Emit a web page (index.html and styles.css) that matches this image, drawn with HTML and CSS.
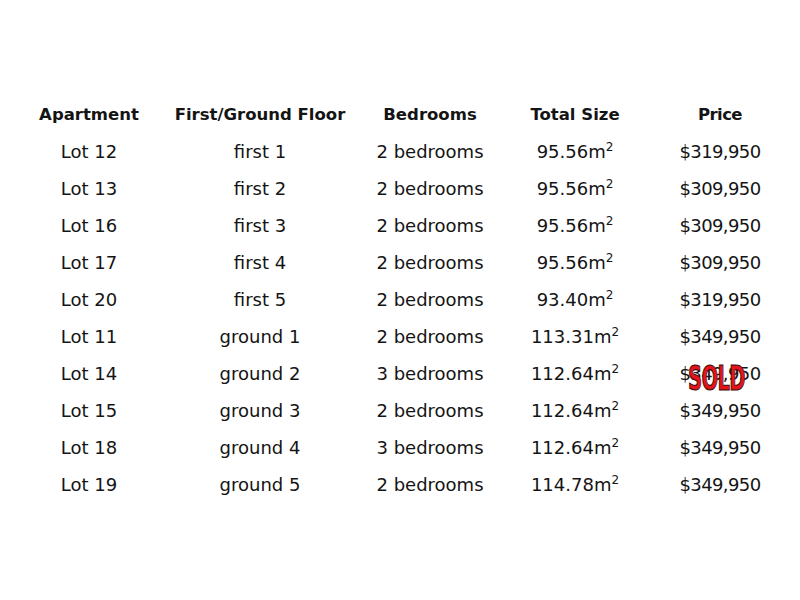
FILE: index.html
```html
<!DOCTYPE html>
<html>
<head>
<meta charset="utf-8">
<link rel="stylesheet" href="styles.css">
</head>
<body>
<div class="table">
  <div class="row head">
    <div class="c1">Apartment</div><div class="c2">First/Ground Floor</div><div class="c3">Bedrooms</div><div class="c4">Total Size</div><div class="c5">Price</div>
  </div>
  <div class="row"><div class="c1">Lot 12</div><div class="c2">first 1</div><div class="c3">2 bedrooms</div><div class="c4">95.56m<sup>2</sup></div><div class="c5">$319,950</div></div>
  <div class="row"><div class="c1">Lot 13</div><div class="c2">first 2</div><div class="c3">2 bedrooms</div><div class="c4">95.56m<sup>2</sup></div><div class="c5">$309,950</div></div>
  <div class="row"><div class="c1">Lot 16</div><div class="c2">first 3</div><div class="c3">2 bedrooms</div><div class="c4">95.56m<sup>2</sup></div><div class="c5">$309,950</div></div>
  <div class="row"><div class="c1">Lot 17</div><div class="c2">first 4</div><div class="c3">2 bedrooms</div><div class="c4">95.56m<sup>2</sup></div><div class="c5">$309,950</div></div>
  <div class="row"><div class="c1">Lot 20</div><div class="c2">first 5</div><div class="c3">2 bedrooms</div><div class="c4">93.40m<sup>2</sup></div><div class="c5">$319,950</div></div>
  <div class="row"><div class="c1">Lot 11</div><div class="c2">ground 1</div><div class="c3">2 bedrooms</div><div class="c4">113.31m<sup>2</sup></div><div class="c5">$349,950</div></div>
  <div class="row"><div class="c1">Lot 14</div><div class="c2">ground 2</div><div class="c3">3 bedrooms</div><div class="c4">112.64m<sup>2</sup></div><div class="c5 sold-cell">$349,950<span class="sold">SOLD</span></div></div>
  <div class="row"><div class="c1">Lot 15</div><div class="c2">ground 3</div><div class="c3">2 bedrooms</div><div class="c4">112.64m<sup>2</sup></div><div class="c5">$349,950</div></div>
  <div class="row"><div class="c1">Lot 18</div><div class="c2">ground 4</div><div class="c3">3 bedrooms</div><div class="c4">112.64m<sup>2</sup></div><div class="c5">$349,950</div></div>
  <div class="row"><div class="c1">Lot 19</div><div class="c2">ground 5</div><div class="c3">2 bedrooms</div><div class="c4">114.78m<sup>2</sup></div><div class="c5">$349,950</div></div>
</div>
</body>
</html>
```
FILE: styles.css
```css
html, body {
  margin: 0;
  padding: 0;
  background: #ffffff;
}
body {
  font-family: "DejaVu Sans", "Liberation Sans", sans-serif;
  color: #141414;
}
.table {
  padding-top: 95px;
  padding-left: 9px;
}
.row {
  display: grid;
  grid-template-columns: 160px 182px 158px 132px 158px;
  height: 37px;
  align-items: center;
  font-size: 18px;
  text-align: center;
  white-space: nowrap;
}
.head {
  font-weight: bold;
  font-size: 16.5px;
  height: 38px;
}
.c5 {
  letter-spacing: -0.6px;
}
sup {
  font-size: 12px;
  vertical-align: 7px;
  line-height: 0;
  letter-spacing: 0;
}
.sold-cell {
  position: relative;
}
.sold {
  position: absolute;
  left: 47px;
  top: 1px;
  font-family: "DejaVu Sans Condensed", "DejaVu Sans", sans-serif;
  font-weight: bold;
  font-size: 32px;
  line-height: 28px;
  color: #e3141c;
  -webkit-text-stroke: 1px #3a0a0a;
  letter-spacing: -1px;
  transform-origin: left top;
  transform: scale(0.68, 1.05);
}
```
